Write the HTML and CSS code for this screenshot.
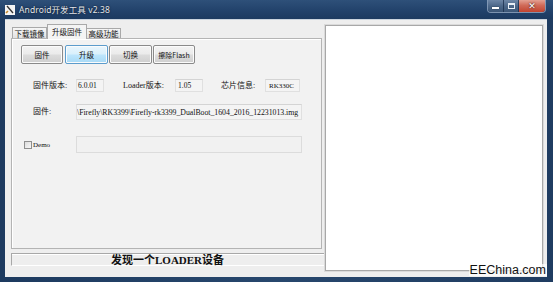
FILE: index.html
```html
<!DOCTYPE html>
<html>
<head>
<meta charset="utf-8">
<link rel="stylesheet" href="styles.css">
</head>
<body>
<div class="window">
  <div class="titlebar">
    <svg class="appicon" width="10" height="10" viewBox="0 0 10 10">
      <rect x="0" y="0" width="10" height="10" fill="#f4f4f4"/>
      <path d="M2 1 L8 8" stroke="#333" stroke-width="1.3"/>
      <path d="M1 8 L3 6" stroke="#c88a2a" stroke-width="1.6"/>
    </svg>
    <span class="title">Android开发工具 v2.38</span>
    <div class="caption">
      <div class="cbtn min"><span class="dash"></span></div>
      <div class="cbtn max"><span class="sq"></span></div>
      <div class="cbtn close">✕</div>
    </div>
  </div>
  <div class="client">
    <div class="leftcol">
      <div class="tabs">
        <div class="tab t1">下载镜像</div>
        <div class="tab t2 active">升级固件</div>
        <div class="tab t3">高级功能</div>
      </div>
      <div class="panel">
        <div class="btnrow">
          <div class="btn b1">固件</div>
          <div class="btn b2 hot">升级</div>
          <div class="btn b3">切换</div>
          <div class="btn b4">擦除Flash</div>
        </div>
        <div class="row r1">
          <span class="lbl l1">固件版本:</span>
          <span class="box v1">6.0.01</span>
          <span class="lbl l2">Loader版本:</span>
          <span class="box v2">1.05</span>
          <span class="lbl l3">芯片信息:</span>
          <span class="box v3">RK330C</span>
        </div>
        <div class="row r2">
          <span class="lbl l1">固件:</span>
          <span class="box path"><span class="pathtext">\Firefly\RK3399\Firefly-rk3399_DualBoot_1604_2016_12231013.img</span></span>
        </div>
        <div class="row r3">
          <span class="chk"></span>
          <span class="lbl demo">Demo</span>
          <span class="box flat"></span>
        </div>
      </div>
      <div class="status">发现一个LOADER设备</div>
    </div>
    <div class="logpane"></div>
  </div>
  <div class="watermark">EEChina.com</div>
</div>
</body>
</html>
```
FILE: styles.css
```css
* { box-sizing: border-box; }
html, body { margin: 0; padding: 0; }
body { width: 553px; height: 282px; overflow: hidden; background: #1e3b60; }
.window {
  position: relative;
  width: 553px; height: 282px;
  display: flex; flex-direction: column;
  background: linear-gradient(90deg, #1d3a5f 0%, #27476d 50%, #1f3c61 100%);
}
.titlebar {
  height: 19px;
  display: flex; align-items: center;
  padding-left: 5px;
  background: linear-gradient(180deg, #2e5079 0%, #21416a 60%, #1c3a60 100%);
}
.appicon { margin-top: 1px; }
.title {
  margin-left: 4px;
  font-family: "Noto Sans", "Noto Sans CJK SC", sans-serif;
  font-size: 8.5px;
  color: #e4e8ee;
  text-shadow: 0 0 1px #0d1a2b, 0 0 2px rgba(10,20,35,0.6);
  letter-spacing: 0.1px;
  line-height: 10px;
}
.caption {
  margin-left: auto;
  margin-right: 7px;
  align-self: flex-start;
  display: flex;
  height: 13px;
  border: 1px solid rgba(200,215,235,0.55);
  border-top: none;
  border-radius: 0 0 4px 4px;
  overflow: hidden;
}
.cbtn {
  height: 12px;
  display: flex; align-items: center; justify-content: center;
  background: linear-gradient(180deg, #6d86a6 0%, #4c6789 50%, #3b5677 100%);
  border-right: 1px solid rgba(20,40,70,0.7);
}
.min { width: 16px; }
.max { width: 15px; }
.close {
  width: 26px; border-right: none;
  background: linear-gradient(180deg, #e3a092 0%, #d06a58 45%, #c2432f 100%);
  color: #fff; font-size: 9px; font-weight: bold; font-family: "DejaVu Sans", sans-serif;
  text-shadow: 0 0 2px #000;
}
.dash { width: 7px; height: 2px; background: #fff; margin-top: 4px; box-shadow: 0 0 1px #000; }
.sq { width: 7px; height: 6px; border: 1px solid #e8eef6; border-top-width: 2px; }

.client {
  flex: 1;
  margin: 0 6px 5px 5px;
  background: #eeeeee;
  display: flex;
  padding: 4px 4px 0 6px;
  border-top: 1px solid #c9d3de;
}
.leftcol {
  width: 314px;
  display: flex; flex-direction: column;
}
.tabs {
  height: 14px;
  display: flex; align-items: flex-end;
  padding-left: 1px;
  position: relative; z-index: 2;
  font-family: "Noto Sans CJK SC", sans-serif;
  font-size: 7.5px;
  color: #111;
}
.tab {
  display: flex; align-items: center; justify-content: center;
  border: 1px solid #a9a9a9; border-bottom: none;
  background: linear-gradient(180deg, #f6f6f6, #e2e2e2);
  line-height: 9px;
}
.t1 { width: 35px; height: 11px; }
.t2 { width: 40px; height: 15px; margin-bottom: -1px; background: #f4f4f4; padding-bottom: 2px; }
.t3 { width: 34px; height: 10px; border-left: none; }
.panel {
  width: 311px; height: 211px;
  border: 1px solid #b4b4b4;
  background: #f2f2f2;
  box-shadow: inset 1px 1px 0 #fff;
  display: flex; flex-direction: column;
  font-family: "Liberation Serif", "Noto Sans CJK SC", serif;
  font-size: 8px;
  color: #111;
}
.btnrow {
  display: flex;
  margin-top: 6px;
  padding-left: 9px;
  font-family: "Noto Sans CJK SC", sans-serif;
  font-size: 7.5px;
}
.btn {
  height: 19px;
  display: flex; align-items: center; justify-content: center;
  border: 1px solid #8a8a8a;
  border-radius: 2px;
  background: linear-gradient(180deg, #f3f3f3 0%, #ebebeb 48%, #dcdcdc 52%, #cfcfcf 100%);
  box-shadow: inset 0 0 0 1px #fbfbfb;
}
.b1 { width: 42px; }
.b2 { width: 43px; margin-left: 2px; }
.b3 { width: 43px; margin-left: 1px; }
.b4 { width: 42px; margin-left: 1px; font-size: 7px; }
.hot {
  border-color: #5c9ccc;
  background: linear-gradient(180deg, #eaf6fd 0%, #d9f0fc 48%, #bee6fd 52%, #a7d9f5 100%);
}
.row { display: flex; align-items: center; padding-left: 21px; }
.r1 { margin-top: 15px; height: 13px; }
.r2 { margin-top: 12px; height: 16px; }
.r3 { margin-top: 16px; height: 17px; padding-left: 12px; }
.lbl { white-space: nowrap; line-height: 10px; }
.l1 { width: 43px; }
.l2 { margin-left: 19px; width: 52px; }
.l3 { margin-left: 18px; width: 44px; }
.box {
  height: 100%;
  display: flex; align-items: center;
  padding-left: 1px;
  background: #f4f4f4;
  border: 1px solid #e0e0e0;
  border-top-color: #d4d4d4;
  font-size: 7.5px;
  white-space: nowrap;
  overflow: hidden;
}
.v1 { width: 28px; }
.v2 { width: 28px; padding-left: 2px; }
.v3 { width: 35px; padding-left: 3px; font-size: 7px; }
.path { width: 226px; padding-left: 0; font-size: 7.8px; letter-spacing: -0.02px; }
.pathtext { flex-shrink: 0; }
.chk {
  width: 8px; height: 8px;
  border: 1px solid #8f8f8f;
  background: linear-gradient(135deg, #dcdcdc, #f8f8f8);
  margin-right: 1px;
}
.demo { width: 43px; font-size: 7px; }
.flat { width: 226px; background: #f1f1f1; border-color: #dcdcdc; }

.status {
  margin-top: 4px;
  width: 313px; height: 13px;
  border-top: 1px solid #a8a8a8;
  border-left: 1px solid #a8a8a8;
  border-bottom: 1px solid #fff;
  box-shadow: inset 0 1px 0 #fff;
  padding-left: 99px;
  font-family: "Liberation Serif", "Noto Sans CJK SC", serif;
  font-weight: bold;
  font-size: 11px;
  line-height: 12px;
  color: #111;
}
.logpane {
  width: 218px; height: 246px;
  margin-top: 1px;
  background: #fff;
  border: 1px solid #a8a8a8;
  box-shadow: 0 0 0 1px #dadada;
}
.watermark {
  position: absolute;
  right: 6px; bottom: 6px;
  font-family: "Liberation Sans", Arial, sans-serif;
  font-size: 12.5px;
  color: #111;
  background: rgba(255,255,255,0.7);
  line-height: 12px;
  padding: 0 1px;
}
```
